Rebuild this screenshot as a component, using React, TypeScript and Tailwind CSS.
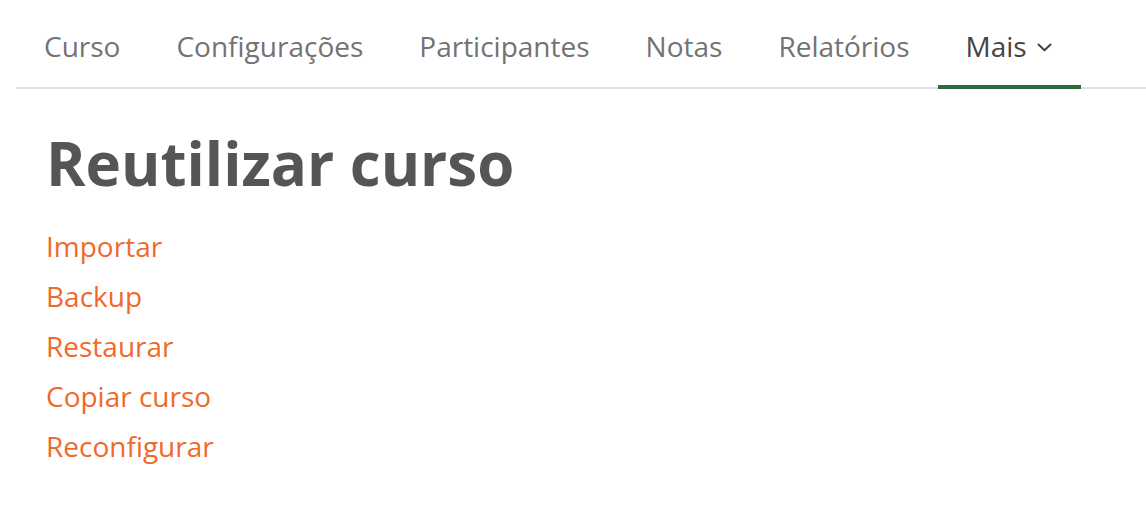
import React from "react";

const tabs = ["Curso", "Configurações", "Participantes", "Notas", "Relatórios"];
const links = ["Importar", "Backup", "Restaurar", "Copiar curso", "Reconfigurar"];

export default function App() {
  return (
    <div className="min-h-[522px] w-full bg-white" style={{ fontFamily: '"Open Sans", "Noto Sans", sans-serif' }}>
      <div className="pl-[16px]">
        <nav className="flex border-b-2 border-[#dee2e6]">
          {tabs.map((t) => (
            <div key={t} className="px-[28px] pt-[25px] pb-[20px] text-[28px] leading-[42px] text-[#737373]">
              {t}
            </div>
          ))}
          <div className="relative flex items-center pl-[28px] pr-[29px] pt-[25px] pb-[20px] text-[28px] leading-[42px] text-[#444]">
            <span>Mais</span>
            <svg className="ml-[10px] mt-[2px]" width="15" height="9" viewBox="0 0 15 9" fill="none">
              <path d="M1.5 1.5 L7.5 7.2 L13.5 1.5" stroke="#444" strokeWidth="2" strokeLinecap="round" strokeLinejoin="round" />
            </svg>
            <div className="absolute left-0 right-0 bottom-[-2px] h-[4px] bg-[#2b6a3c]" />
          </div>
        </nav>
      </div>
      <div className="px-[46px]">
        <h2 className="mt-[38px] text-[60px] leading-[1.2] font-bold text-[#555]">Reutilizar curso</h2>
        <ul className="mt-[22px] flex flex-col">
          {links.map((l) => (
            <li key={l} className="text-[28px] leading-[50px] text-[#f0692c]">
              {l}
            </li>
          ))}
        </ul>
      </div>
    </div>
  );
}
